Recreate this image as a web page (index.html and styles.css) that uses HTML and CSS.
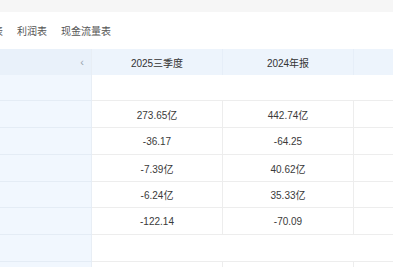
FILE: index.html
```html
<!DOCTYPE html>
<html lang="zh-CN">
<head>
<meta charset="utf-8">
<link rel="stylesheet" href="styles.css">
</head>
<body>
<div class="page">
  <div class="topbar"></div>
  <div class="tabs">
    <span class="tab">资产负债表</span>
    <span class="tab">利润表</span>
    <span class="tab">现金流量表</span>
  </div>
  <div class="table">
    <div class="row head">
      <div class="cell fixed"><span class="chev">‹</span></div>
      <div class="cell">2025三季度</div>
      <div class="cell">2024年报</div>
      <div class="cell"></div>
    </div>
    <div class="row section">
      <div class="cell fixed"></div>
      <div class="cell"></div>
      <div class="cell"></div>
      <div class="cell"></div>
    </div>
    <div class="row data">
      <div class="cell fixed"></div>
      <div class="cell">273.65亿</div>
      <div class="cell">442.74亿</div>
      <div class="cell"></div>
    </div>
    <div class="row data">
      <div class="cell fixed"></div>
      <div class="cell">-36.17</div>
      <div class="cell">-64.25</div>
      <div class="cell"></div>
    </div>
    <div class="row data">
      <div class="cell fixed"></div>
      <div class="cell">-7.39亿</div>
      <div class="cell">40.62亿</div>
      <div class="cell"></div>
    </div>
    <div class="row data short">
      <div class="cell fixed"></div>
      <div class="cell">-6.24亿</div>
      <div class="cell">35.33亿</div>
      <div class="cell"></div>
    </div>
    <div class="row data">
      <div class="cell fixed"></div>
      <div class="cell">-122.14</div>
      <div class="cell">-70.09</div>
      <div class="cell"></div>
    </div>
    <div class="row section tall">
      <div class="cell fixed"></div>
      <div class="cell"></div>
      <div class="cell"></div>
      <div class="cell"></div>
    </div>
    <div class="row data">
      <div class="cell fixed"></div>
      <div class="cell"></div>
      <div class="cell"></div>
      <div class="cell"></div>
    </div>
  </div>
</div>
</body>
</html>
```
FILE: styles.css
```css
* { box-sizing: border-box; }
html, body { margin: 0; padding: 0; background: #fff; }
body {
  font-family: "Liberation Sans", "Noto Sans CJK SC", sans-serif;
  font-size: 10px;
  color: #3a3a3a;
}
.page { width: 393px; height: 267px; overflow: hidden; }
.topbar { height: 12px; background: #f6f6f6; }
.tabs {
  height: 37px;
  display: flex;
  align-items: center;
  gap: 14px;
  margin-left: -47px;
  color: #555;
  font-size: 10px;
  white-space: nowrap;
}
.table { display: flex; flex-direction: column; }
.row {
  display: grid;
  grid-template-columns: 92px 130px 131px 130px;
  height: 27px;
  border-bottom: 1px solid #ededed;
}
.row.head { height: 26px; background: #edf4fc; border-bottom: none; color: #333; }
.row.section { height: 26px; }
.row.section.tall { height: 27px; }
.row.short { height: 26px; }
.cell {
  display: flex;
  align-items: center;
  justify-content: center;
  white-space: nowrap;
}
.row.data .cell + .cell + .cell { border-left: 1px solid #ededed; }
.row.data .cell + .cell + .cell + .cell { border-left: 1px solid #ededed; }
.row.head .cell + .cell + .cell { border-left: 1px solid #e6eef8; }
.cell.fixed {
  background: #f1f7fe;
  justify-content: flex-end;
  padding-right: 8px;
  box-shadow: inset -1px 0 0 #e8eef5;
  margin-bottom: -1px;
  border-bottom: 1px solid #e4ecf5;
}
.row.head .cell.fixed { background: #e9f1fa; border-bottom: none; margin-bottom: 0; }
.chev { color: #9aa3ad; font-size: 11px; line-height: 1; }
```
